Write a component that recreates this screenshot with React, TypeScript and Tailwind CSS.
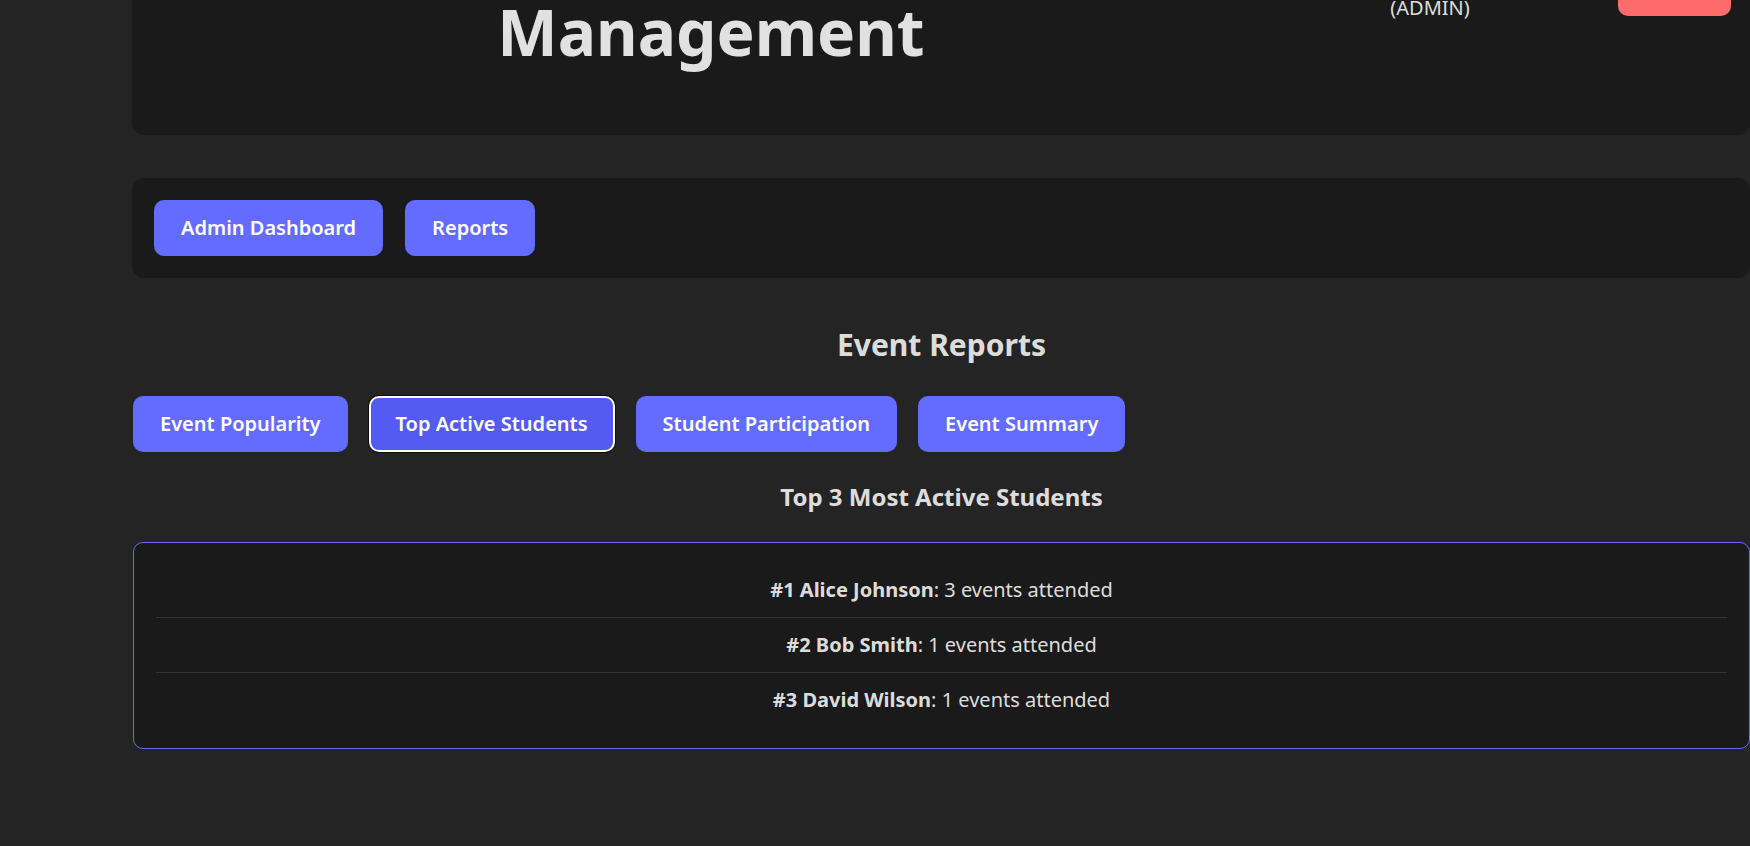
import React from "react";

const navBtn =
  "rounded-[10px] border border-transparent bg-[#646cff] px-[26px] py-3 text-[20px] leading-[30px] font-semibold text-white whitespace-nowrap";

const students = [
  { rank: 1, name: "Alice Johnson", count: 3 },
  { rank: 2, name: "Bob Smith", count: 1 },
  { rank: 3, name: "David Wilson", count: 1 },
];

const tabs = ["Event Popularity", "Top Active Students", "Student Participation", "Event Summary"];

export default function App() {
  return (
    <div className="flex h-screen flex-col overflow-hidden bg-[#242424] font-['Noto_Sans',sans-serif] text-[rgba(255,255,255,0.87)]">
      <div className="-mt-[100px] ml-[132px] flex w-[1618px] flex-col">
        {/* Header */}
        <header className="flex h-[235px] items-start rounded-[12px] bg-[#1a1a1a] pl-5">
          <h1 className="mt-[27px] w-[1118px] text-center text-[64px] leading-[1.1] font-bold">
            Event
            <br />
            Management
          </h1>
          <div className="mt-[63px] ml-[60px] w-[200px] text-center text-[20px] leading-[30px]">
            <div className="whitespace-nowrap">Welcome, Admin</div>
            <div className="whitespace-nowrap">(ADMIN)</div>
          </div>
          <button className="mt-[60px] ml-[88px] h-[56px] w-[113px] rounded-[10px] bg-[#ff6b6b] text-[20px] leading-[30px] font-semibold text-white">
            Logout
          </button>
        </header>

        {/* Nav */}
        <nav className="mt-[43px] flex gap-[22px] rounded-[12px] bg-[#1a1a1a] p-[22px]">
          <button className={navBtn}>Admin Dashboard</button>
          <button className={navBtn}>Reports</button>
        </nav>

        {/* Reports */}
        <section className="ml-px flex flex-col">
          <h2 className="mt-[49px] text-center text-[30px] leading-[36px] font-bold">Event Reports</h2>
          <div className="mt-[33px] flex gap-[21px]">
            {tabs.map((t) =>
              t === "Top Active Students" ? (
                <button
                  key={t}
                  className="rounded-[10px] border-2 border-white bg-[#535bf2] px-[25px] py-[11px] text-[20px] leading-[30px] font-semibold whitespace-nowrap text-white shadow-[0_0_0_1px_#0d0d0d]"
                >
                  {t}
                </button>
              ) : (
                <button key={t} className={navBtn}>
                  {t}
                </button>
              )
            )}
          </div>
          <h3 className="mt-[31px] text-center text-[24px] leading-[28px] font-bold">Top 3 Most Active Students</h3>
          <div className="mt-[31px] rounded-[10px] border border-[#646cff] bg-[#1a1a1a] px-[22px] pt-[20px] pb-[21px]">
            <ul>
              {students.map((s, i) => (
                <li
                  key={s.rank}
                  className={
                    "py-3 text-center text-[20px] leading-[30px] " +
                    (i < students.length - 1 ? "border-b border-[#333333]" : "")
                  }
                >
                  <strong className="font-bold">
                    #{s.rank} {s.name}
                  </strong>
                  : {s.count} events attended
                </li>
              ))}
            </ul>
          </div>
        </section>
      </div>
    </div>
  );
}
